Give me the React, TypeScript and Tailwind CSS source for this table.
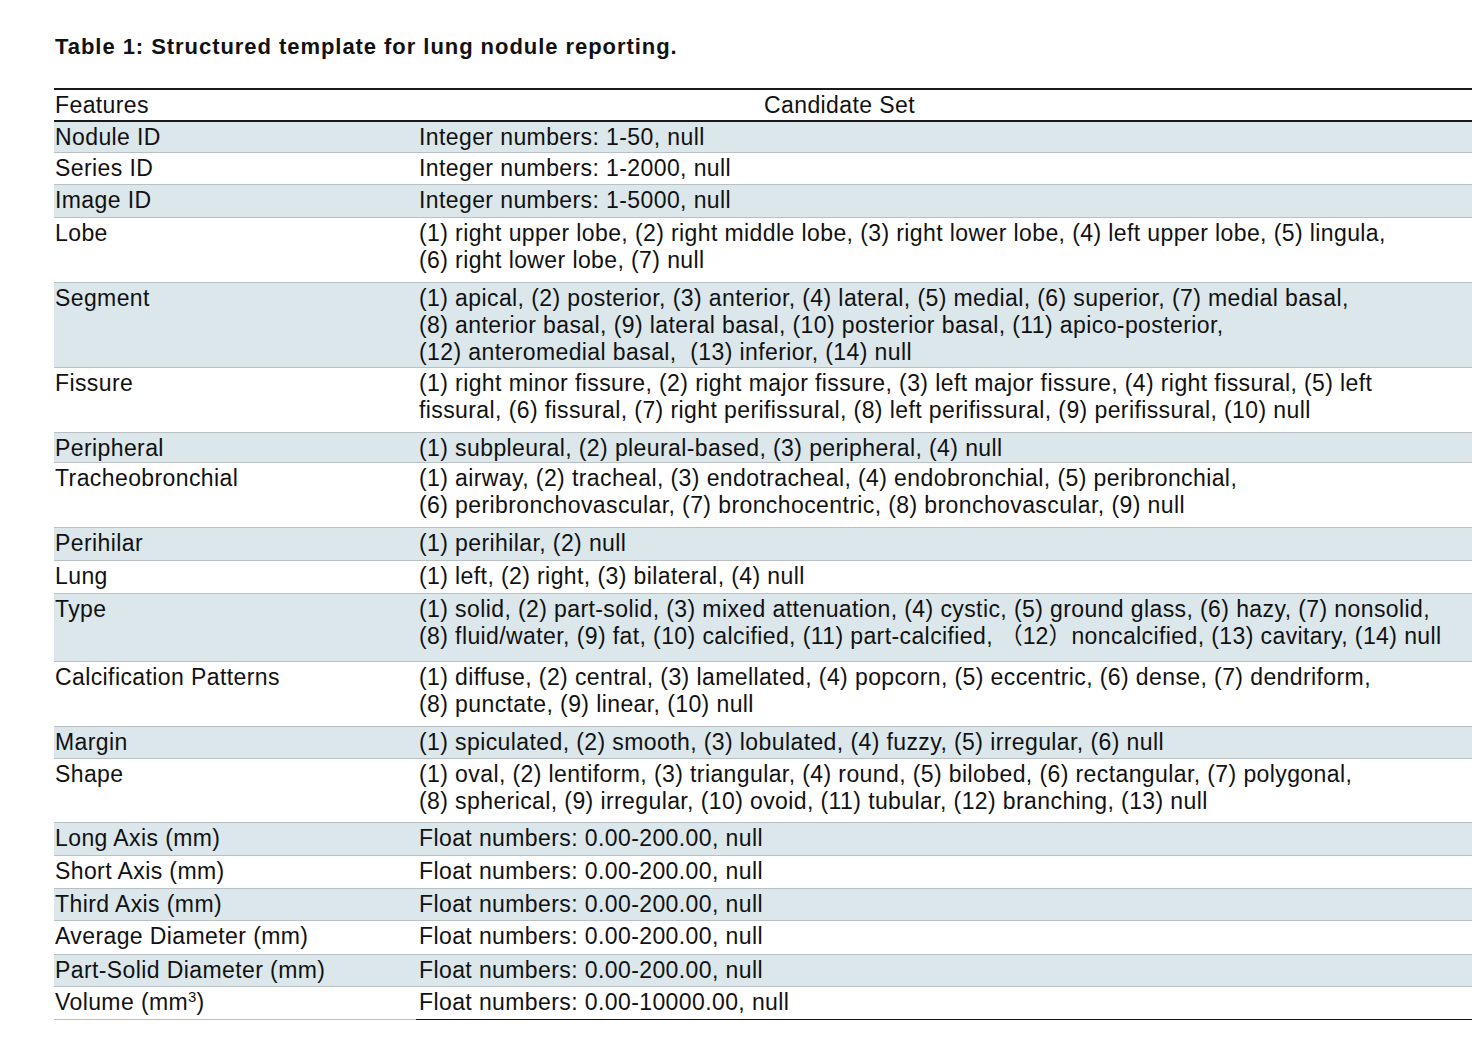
import React from "react"

interface Row {
  feature: React.ReactNode
  lines: React.ReactNode[]
  h: string
  shaded: boolean
}

const rows: Row[] = [
  { feature: "Nodule ID", lines: ["Integer numbers: 1-50, null"], h: "h-[31px]", shaded: true },
  { feature: "Series ID", lines: ["Integer numbers: 1-2000, null"], h: "h-[32px]", shaded: false },
  { feature: "Image ID", lines: ["Integer numbers: 1-5000, null"], h: "h-[33px]", shaded: true },
  {
    feature: "Lobe",
    lines: [
      "(1) right upper lobe, (2) right middle lobe, (3) right lower lobe, (4) left upper lobe, (5) lingula,",
      "(6) right lower lobe, (7) null",
    ],
    h: "h-[65px]",
    shaded: false,
  },
  {
    feature: "Segment",
    lines: [
      "(1) apical, (2) posterior, (3) anterior, (4) lateral, (5) medial, (6) superior, (7) medial basal,",
      "(8) anterior basal, (9) lateral basal, (10) posterior basal, (11) apico-posterior,",
      "(12) anteromedial basal,  (13) inferior, (14) null",
    ],
    h: "h-[85px]",
    shaded: true,
  },
  {
    feature: "Fissure",
    lines: [
      "(1) right minor fissure, (2) right major fissure, (3) left major fissure, (4) right fissural, (5) left",
      "fissural, (6) fissural, (7) right perifissural, (8) left perifissural, (9) perifissural, (10) null",
    ],
    h: "h-[65px]",
    shaded: false,
  },
  {
    feature: "Peripheral",
    lines: ["(1) subpleural, (2) pleural-based, (3) peripheral, (4) null"],
    h: "h-[30px]",
    shaded: true,
  },
  {
    feature: "Tracheobronchial",
    lines: [
      "(1) airway, (2) tracheal, (3) endotracheal, (4) endobronchial, (5) peribronchial,",
      "(6) peribronchovascular, (7) bronchocentric, (8) bronchovascular, (9) null",
    ],
    h: "h-[65px]",
    shaded: false,
  },
  { feature: "Perihilar", lines: ["(1) perihilar, (2) null"], h: "h-[33px]", shaded: true },
  { feature: "Lung", lines: ["(1) left, (2) right, (3) bilateral, (4) null"], h: "h-[33px]", shaded: false },
  {
    feature: "Type",
    lines: [
      "(1) solid, (2) part-solid, (3) mixed attenuation, (4) cystic, (5) ground glass, (6) hazy, (7) nonsolid,",
      <>
        (8) fluid/water, (9) fat, (10) calcified, (11) part-calcified,{" "}
        <span className="tracking-normal">（12）</span>noncalcified, (13) cavitary, (14) null
      </>,
    ],
    h: "h-[68px]",
    shaded: true,
  },
  {
    feature: "Calcification Patterns",
    lines: [
      "(1) diffuse, (2) central, (3) lamellated, (4) popcorn, (5) eccentric, (6) dense, (7) dendriform,",
      "(8) punctate, (9) linear, (10) null",
    ],
    h: "h-[65px]",
    shaded: false,
  },
  {
    feature: "Margin",
    lines: ["(1) spiculated, (2) smooth, (3) lobulated, (4) fuzzy, (5) irregular, (6) null"],
    h: "h-[32px]",
    shaded: true,
  },
  {
    feature: "Shape",
    lines: [
      "(1) oval, (2) lentiform, (3) triangular, (4) round, (5) bilobed, (6) rectangular, (7) polygonal,",
      "(8) spherical, (9) irregular, (10) ovoid, (11) tubular, (12) branching, (13) null",
    ],
    h: "h-[64px]",
    shaded: false,
  },
  { feature: "Long Axis (mm)", lines: ["Float numbers: 0.00-200.00, null"], h: "h-[33px]", shaded: true },
  { feature: "Short Axis (mm)", lines: ["Float numbers: 0.00-200.00, null"], h: "h-[33px]", shaded: false },
  { feature: "Third Axis (mm)", lines: ["Float numbers: 0.00-200.00, null"], h: "h-[32px]", shaded: true },
  { feature: "Average Diameter (mm)", lines: ["Float numbers: 0.00-200.00, null"], h: "h-[34px]", shaded: false },
  { feature: "Part-Solid Diameter (mm)", lines: ["Float numbers: 0.00-200.00, null"], h: "h-[32px]", shaded: true },
  {
    feature: (
      <>
        Volume (mm<sup className="text-[15px] tracking-normal -top-[0.55em]">3</sup>)
      </>
    ),
    lines: ["Float numbers: 0.00-10000.00, null"],
    h: "h-[33px]",
    shaded: false,
  },
]

export default function App() {
  return (
    <div
      className="min-h-screen bg-white text-[#111] pl-[54px] pr-[6px] pt-[33px]"
      style={{ fontFamily: '"Liberation Sans", Arial, "Noto Sans CJK SC", sans-serif' }}
    >
      <h1 className="pl-[1px] text-[22px] leading-[27px] font-bold tracking-[0.95px]">
        Table 1: Structured template for lung nodule reporting.
      </h1>

      <div className="mt-[28px] text-[23px] leading-[27px] tracking-[0.4px] whitespace-pre">
        {/* header */}
        <div className="flex h-[34px] items-center border-t-2 border-b-2 border-[#1a1a1a]">
          <div className="w-[362px] pl-[1px]">Features</div>
          <div className="flex-1 pl-[348px]">Candidate Set</div>
        </div>

        {rows.map((row, i) => {
          const last = i === rows.length - 1
          return (
            <div key={i} className={`flex ${row.h} ${row.shaded ? "bg-[#dbe7eb]" : "bg-white"}`}>
              <div className="w-[362px] pl-[1px] pt-[2px] border-b border-[#b9bfc2]">{row.feature}</div>
              <div
                className={`flex-1 pl-[3px] pt-[2px] border-b ${
                  last ? "border-[#111] bg-white" : "border-[#b9bfc2]"
                }`}
              >
                {row.lines.map((line, j) => (
                  <div key={j}>{line}</div>
                ))}
              </div>
            </div>
          )
        })}
      </div>
    </div>
  )
}
